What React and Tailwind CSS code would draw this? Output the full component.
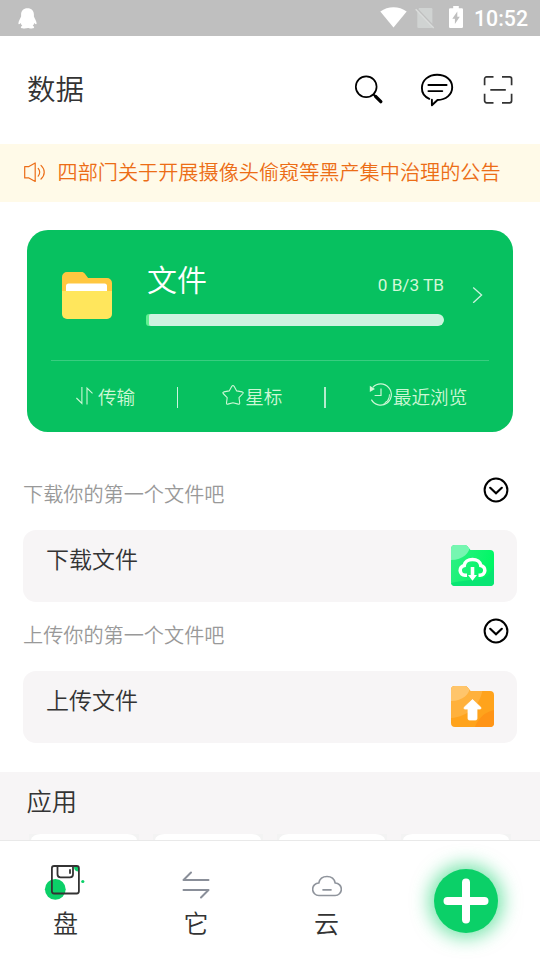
import clsx from 'clsx';

const shortcuts = [1, 2, 3, 4];

function StatusBar() {
  return (
    <div className="flex h-9 items-start justify-between bg-[#bfbfbf] pl-[18px] pr-3 text-white">
      <svg className="mt-2 h-[21px] w-[19px]" viewBox="0 0 19 21" fill="currentColor">
        <path d="M9.500 0.300C5.400 0.300 3.100 3 3.100 6.500v2C2.400 10.400 0.500 12.900 0.400 15.200c0 1.500 0.900 1.500 2.200-0.200 0.300 1.100 0.900 2 1.700 2.800-1.300 0.500-1.900 1.600-1 2.200 1 0.600 4.700 0.500 6.200-0.100 1.500 0.600 5.200 0.700 6.200 0.100 0.900-0.600 0.300-1.700-1-2.200 0.800-0.800 1.400-1.700 1.700-2.800 1.300 1.700 2.200 1.700 2.200 0.200-0.100-2.300-2-4.800-2.700-6.700v-2C15.900 3 13.600 0.300 9.500 0.300z" />
      </svg>
      <div className="flex items-start">
        <svg className="mt-[7px] h-[21px] w-[27px]" viewBox="0 0 27 21" fill="currentColor">
          <path d="M0.300 4.600C8 -1.300 19 -1.300 26.700 4.600L13.500 20.600z" />
        </svg>
        <svg className="ml-2 mt-[7px] h-[22px] w-5" viewBox="0 0 20 22">
          <path d="M4 1h12.200a1.200 1.200 0 0 1 1.200 1.200v17.600a1.200 1.200 0 0 1-1.200 1.200H3.500a1.200 1.200 0 0 1-1.200-1.200V4z" fill="#d0d3d2" />
          <path d="M1.600 1.800l18 18.600" stroke="#bfbfbf" strokeWidth="2" />
          <path d="M0.700 2.300l18 18.600" stroke="#dadcdb" strokeWidth="1.400" />
        </svg>
        <svg className="ml-[14px] mt-[6px] h-[22px] w-[14px]" viewBox="0 0 14 22">
          <path d="M4.200 0h5.600v2.200h3a1.200 1.200 0 0 1 1.200 1.200v17.400a1.200 1.200 0 0 1-1.200 1.200H1.200A1.200 1.200 0 0 1 0 20.800V3.400a1.200 1.200 0 0 1 1.200-1.200h3z" fill="currentColor" />
          <path d="M8.300 5.500v5.300h2.500L5.900 18v-5.200H3.300z" fill="#bfbfbf" />
        </svg>
        <span className="ml-[11px] mt-[6px] font-['Roboto',sans-serif] text-[21.300px] font-medium leading-[26px]">10:52</span>
      </div>
    </div>
  );
}

function Header() {
  return (
    <header className="flex h-[108px] items-start justify-between pl-[27px] pr-[27px] pt-[37px] text-black">
      <h1 className="-mt-px text-[28.500px] font-[350] leading-8 text-[#333]">数据</h1>
      <div className="flex items-start">
        <svg className="mt-[2px] h-[30px] w-[30px]" viewBox="0 0 30 30" fill="none" stroke="currentColor" strokeLinecap="round">
          <circle cx="12.200" cy="11.800" r="10.400" strokeWidth="1.700" />
          <path d="M19.800 19.800l2 2" strokeWidth="2" />
          <path d="M21.800 21.600l5 5" strokeWidth="3.400" />
        </svg>
        <svg className="ml-9 h-[34px] w-[34px]" viewBox="0 0 34 34" fill="none" stroke="currentColor" strokeWidth="1.900" strokeLinecap="round" strokeLinejoin="round">
          <path d="M9.300 25.800C4.500 23.800 1.800 19.500 1.900 14.800 2.100 7 8.500 1.800 17.100 1.800S32.200 7 32.200 14.300c0 7.300-6.400 12.600-14.700 12.700L11.900 32.300V26.800" />
          <path d="M8.400 12h18.200M8.400 18.100H22.300" />
        </svg>
        <svg className="ml-[29px] mt-[2px] h-[30px] w-[30px]" viewBox="0 0 30 30" fill="none" stroke="#333" strokeWidth="1.700">
          <path d="M10.500 1.900H3.600a2 2 0 0 0-2 2v6.300M19 1.900h7.600a2 2 0 0 1 2 2v6.300M1.600 18.800v7a2 2 0 0 0 2 2h6.900M28.600 18.800v7a2 2 0 0 1-2 2H19M7.300 14.800h15.500" />
        </svg>
      </div>
    </header>
  );
}

function Notice() {
  return (
    <div className="flex h-[58px] items-start bg-[#fffae8] pl-6 text-[#ec6d16]">
      <svg className="mt-[18px] h-[21px] w-[22px]" viewBox="0 0 22 21" fill="none" stroke="currentColor" strokeWidth="1.200" strokeLinejoin="round">
        <path d="M0.700 4.600h4.200L11.200 1v18.400L4.900 15.900H0.700z" />
        <path d="M14.200 6.400c1.900 2.400 1.900 5.400 0 7.800M17 3.400c4.300 4 4.300 9.600 0 13.600" strokeLinecap="round" />
      </svg>
      <p className="ml-[11.500px] mt-[14px] whitespace-nowrap text-[20.150px] font-[350] leading-7">四部门关于开展摄像头偷窥等黑产集中治理的公告</p>
    </div>
  );
}

function StorageCard() {
  return (
    <section className="mx-[27px] mt-7 h-[202px] rounded-[21px] bg-[#07c160] text-white">
      <div className="flex h-[130px] items-start pl-[35px]">
        <svg className="mt-[42px] h-[47px] w-[50px]" viewBox="0 0 50 47">
          <path d="M5 0h14.500c1.500 0 2.500 0.500 3.400 1.700l3.200 4.300H45a5 5 0 0 1 5 5V30H0V5a5 5 0 0 1 5-5z" fill="#ffc740" />
          <path d="M4 20v-6a2.500 2.500 0 0 1 2.500-2.500h36A2.500 2.500 0 0 1 45 14v6z" fill="#fff" />
          <path d="M0 19h50v23a5 5 0 0 1-5 5H5a5 5 0 0 1-5-5z" fill="#ffe65c" />
        </svg>
        <div className="ml-[34px] mt-[30px] w-[298px]">
          <div className="flex items-start justify-between">
            <h2 className="pl-px text-[30px] font-[350] leading-9">文件</h2>
            <span className="mt-[15px] font-['Roboto',sans-serif] text-[17.200px] leading-5 text-[#d4f8d8]">0 B/3 TB</span>
          </div>
          <div className="mt-[18px] flex h-3 overflow-hidden rounded-l-[3px] rounded-r-md bg-[#60f090]">
            <div className="ml-[3px] h-3 flex-1 rounded-l-[2px] rounded-r-md bg-[#cdf3e0]" />
          </div>
        </div>
        <svg className="ml-7 mt-[57px] h-4 w-[11px]" viewBox="0 0 11 16" fill="none" stroke="#cdf3df" strokeWidth="1.300">
          <path d="M1.200 0.500L9.600 8L1.200 15.800" />
        </svg>
      </div>
      <div className="mx-6 h-px bg-[#39cd80]" />
      <div className="flex items-start pl-[49px] pt-[22px] text-[18.600px] font-[350] leading-7 text-[#cdf7d5]">
        <svg className="mt-[3px] h-5 w-[17px]" viewBox="0 0 17 20" fill="none" stroke="currentColor" strokeWidth="1.100">
          <path d="M5.900 1v16.500L0.400 12M11 18.500V2l5.500 5.400" />
        </svg>
        <span className="-mt-px ml-[5px]">传输</span>
        <span className="ml-[42px] mt-[4px] h-[21px] w-px bg-[#cdf3df]" />
        <svg className="ml-11 mt-[2px] h-[22px] w-[22px]" viewBox="0 0 22 22" fill="none" stroke="currentColor" strokeWidth="1.100" strokeLinejoin="round">
          <path d="M9.800 1.300q1.200-1.500 2.300 0l2.600 4.600 5.600 1q1.500 0.500 0.600 1.600l-3.900 4.200 0.700 5.200q0 1.700-1.500 1.200L11 17.800l-5.100 1.300q-1.500 0.500-1.400-1.200l0.700-5.200-4-4.200q-0.900-1.100 0.600-1.600l5.400-1z" />
        </svg>
        <span className="-mt-px ml-[1px]">星标</span>
        <span className="ml-[41.500px] mt-[4px] h-[21px] w-[2px] bg-[#b5ecce]" />
        <svg className="ml-[43px] h-6 w-6" viewBox="0 0 24 24" fill="none" stroke="currentColor" strokeWidth="1.200">
          <path d="M3.900 4.400A10.600 10.600 0 1 1 2.400 16.600" />
          <path d="M14.500 20.800q6-2 6-9.500M16 19.500q3.500-1.300 4-5" strokeWidth="0.900" />
          <path d="M12 5.500v7H5.600" />
          <path d="M0.800 2.800v6.200l5.200-3z" fill="currentColor" stroke="none" />
        </svg>
        <span className="-mt-px">最近浏览</span>
      </div>
    </section>
  );
}

function ChevronCircle() {
  return (
    <svg className="h-[26px] w-[26px]" viewBox="0 0 26 26" fill="none" stroke="#000" strokeWidth="2">
      <circle cx="13" cy="13" r="11.400" />
      <path d="M7.200 10.800L13 16.200l5.800-5.400" strokeWidth="2.200" strokeLinecap="round" />
    </svg>
  );
}

function DownloadFolder() {
  return (
    <svg className="h-[41px] w-[43px]" viewBox="0 0 43 41">
      <defs>
        <linearGradient id="dl" x1="0" y1="0" x2="1" y2="0.300">
          <stop offset="0" stopColor="#30ef85" />
          <stop offset="1" stopColor="#00f765" />
        </linearGradient>
        <clipPath id="dlClip">
          <path d="M4 0h9.500c1.300 0 2 0.300 2.900 1.300L19.500 5H39a4 4 0 0 1 4 4v28a4 4 0 0 1-4 4H4a4 4 0 0 1-4-4V4a4 4 0 0 1 4-4z" />
        </clipPath>
      </defs>
      <g clipPath="url(#dlClip)">
        <path d="M0 0h43v41H0z" fill="url(#dl)" />
        <path d="M43 20C40 30 34 33 26 35c-12 0-20 2-26 3v3h43z" fill="#08e573" />
        <path d="M0 0h19c0 8-7 15-19 15z" fill="#76f6b1" />
      </g>
      <path d="M16 30.300h-2a5 5 0 0 1-0.800-9.900C13.600 17 17 14.500 21.500 14.500s7.900 2.500 8.300 5.900A5 5 0 0 1 29 30.300H27.500" fill="none" stroke="#fff" strokeWidth="3.600" />
      <path d="M19.700 22h3.600v8h2.700L21.500 35.800 17 30h2.700z" fill="#fff" />
    </svg>
  );
}

function UploadFolder() {
  return (
    <svg className="h-[41px] w-[43px]" viewBox="0 0 43 41">
      <defs>
        <clipPath id="upClip">
          <path d="M4 0h9.500c1.300 0 2 0.300 2.900 1.300L19.500 5H39a4 4 0 0 1 4 4v28a4 4 0 0 1-4 4H4a4 4 0 0 1-4-4V4a4 4 0 0 1 4-4z" />
        </clipPath>
      </defs>
      <g clipPath="url(#upClip)">
        <path d="M0 0h43v41H0z" fill="#ffa31c" />
        <path d="M0 0h32C31 18 17 31 0 32z" fill="#ffb13c" />
        <path d="M0 0h19c0 8-7 15-19 15z" fill="#ffc56b" />
        <path d="M43 24C32 27 27 33 24 41h19z" fill="#ff9416" />
      </g>
      <path d="M21.500 13.500L29.800 21.300q0.900 1.700-0.900 1.700H26v9.500a1.500 1.500 0 0 1-1.500 1.500h-6a1.500 1.500 0 0 1-1.500-1.500V23h-2.900q-1.800 0-0.900-1.700z" fill="#fff" stroke="#fff" strokeWidth="0.800" strokeLinejoin="round" />
    </svg>
  );
}

function TaskRow({ hint, title, icon, className }) {
  return (
    <section className={clsx('px-[23px]', className)}>
      <div className="flex h-[53px] items-start justify-between pr-2">
        <p className="mt-[3px] text-[20.150px] font-[350] leading-7 text-[#999]">{hint}</p>
        <ChevronCircle />
      </div>
      <div className="flex h-[72px] items-start justify-between rounded-[13px] bg-[#f7f5f6] pl-[23px] pr-[23px]">
        <span className="mt-[12px] text-[23px] font-[350] leading-8 text-[#333]">{title}</span>
        <div className="mt-[15px]">{icon}</div>
      </div>
    </section>
  );
}

function Apps() {
  return (
    <section className="mt-[29px] h-[68px] overflow-hidden bg-[#f7f5f6]">
      <h2 className="pl-[26.500px] pt-[12px] text-[25.300px] font-[350] leading-8 text-[#333]">应用</h2>
      <div className="mt-[18px] flex gap-[14px] pl-[29px]">
        {shortcuts.map((id) => (
          <div key={id} className="h-20 w-[110px] shrink-0 bg-[#f3f3f3] px-[2px]">
            <div className="h-20 rounded-t-[10px_6px] bg-white" />
          </div>
        ))}
      </div>
    </section>
  );
}

function TabBar() {
  return (
    <nav className="flex h-[120px] border-t border-[#e9e9e9] bg-white text-[25px] font-[350] leading-8 text-[#333]">
      <div className="flex w-[131px] flex-col items-center">
        <svg className="mr-px mt-[23px] h-[38px] w-[42px]" viewBox="0 0 42 38" fill="none">
          <circle cx="11.300" cy="25.300" r="10.400" fill="#0bd068" />
          <path d="M30 3h4.500v4.500C32 7.500 30 6 30 3z" fill="#0bd068" />
          <circle cx="38.800" cy="17.500" r="1.600" fill="#0bd068" />
          <g stroke="#333" strokeWidth="1.800">
            <rect x="7.900" y="2" width="27" height="27.500" rx="2.200" />
            <path d="M13.500 2v8.300a3 3 0 0 0 3 3h9.500a3 3 0 0 0 3-3V2" />
            <path d="M26 5.200v4.600" />
          </g>
        </svg>
        <span className="mt-[4px]">盘</span>
      </div>
      <div className="flex w-[130px] flex-col items-center">
        <svg className="mt-[30px] h-[28px] w-[28px]" viewBox="0 0 28 28" fill="none" stroke="#8a8f99" strokeWidth="2" strokeLinecap="round" strokeLinejoin="round">
          <path d="M26.500 9H1.500L9 1.500M1.500 19h25L19 26.500" />
        </svg>
        <span className="mt-[7px]">它</span>
      </div>
      <div className="flex w-[131px] flex-col items-center">
        <svg className="mt-[34px] h-[22px] w-[30px]" viewBox="0 0 30 22" fill="none" stroke="#8f949c" strokeWidth="1.600" strokeLinecap="round">
          <path d="M7 20.500a6.200 6.200 0 0 1-0.200-12.500C7.600 4 10.900 1.500 15 1.500s7.400 2.500 8.200 6.500A6.200 6.200 0 0 1 23 20.500z" />
          <path d="M11 14.900h8" />
        </svg>
        <span className="mt-[9px]">云</span>
      </div>
      <div className="pl-[42px] pt-7">
        <button className="flex h-16 w-16 items-center justify-center rounded-full bg-[#0bd068] shadow-[0_0_18px_5px_rgba(11,208,104,0.550)]">
          <svg className="h-[46px] w-[46px]" viewBox="0 0 46 46" stroke="#fff" strokeWidth="8" strokeLinecap="round">
            <path d="M23 4.500v37M4.500 23h37" />
          </svg>
        </button>
      </div>
    </nav>
  );
}

export default function App() {
  return (
    <div className="flex h-[960px] w-[540px] flex-col overflow-hidden bg-white font-['Noto_Sans_CJK_SC',sans-serif]">
      <StatusBar />
      <Header />
      <Notice />
      <StorageCard />
      <TaskRow className="mt-[45px]" hint="下载你的第一个文件吧" title="下载文件" icon={<DownloadFolder />} />
      <TaskRow className="mt-4" hint="上传你的第一个文件吧" title="上传文件" icon={<UploadFolder />} />
      <Apps />
      <TabBar />
    </div>
  );
}
